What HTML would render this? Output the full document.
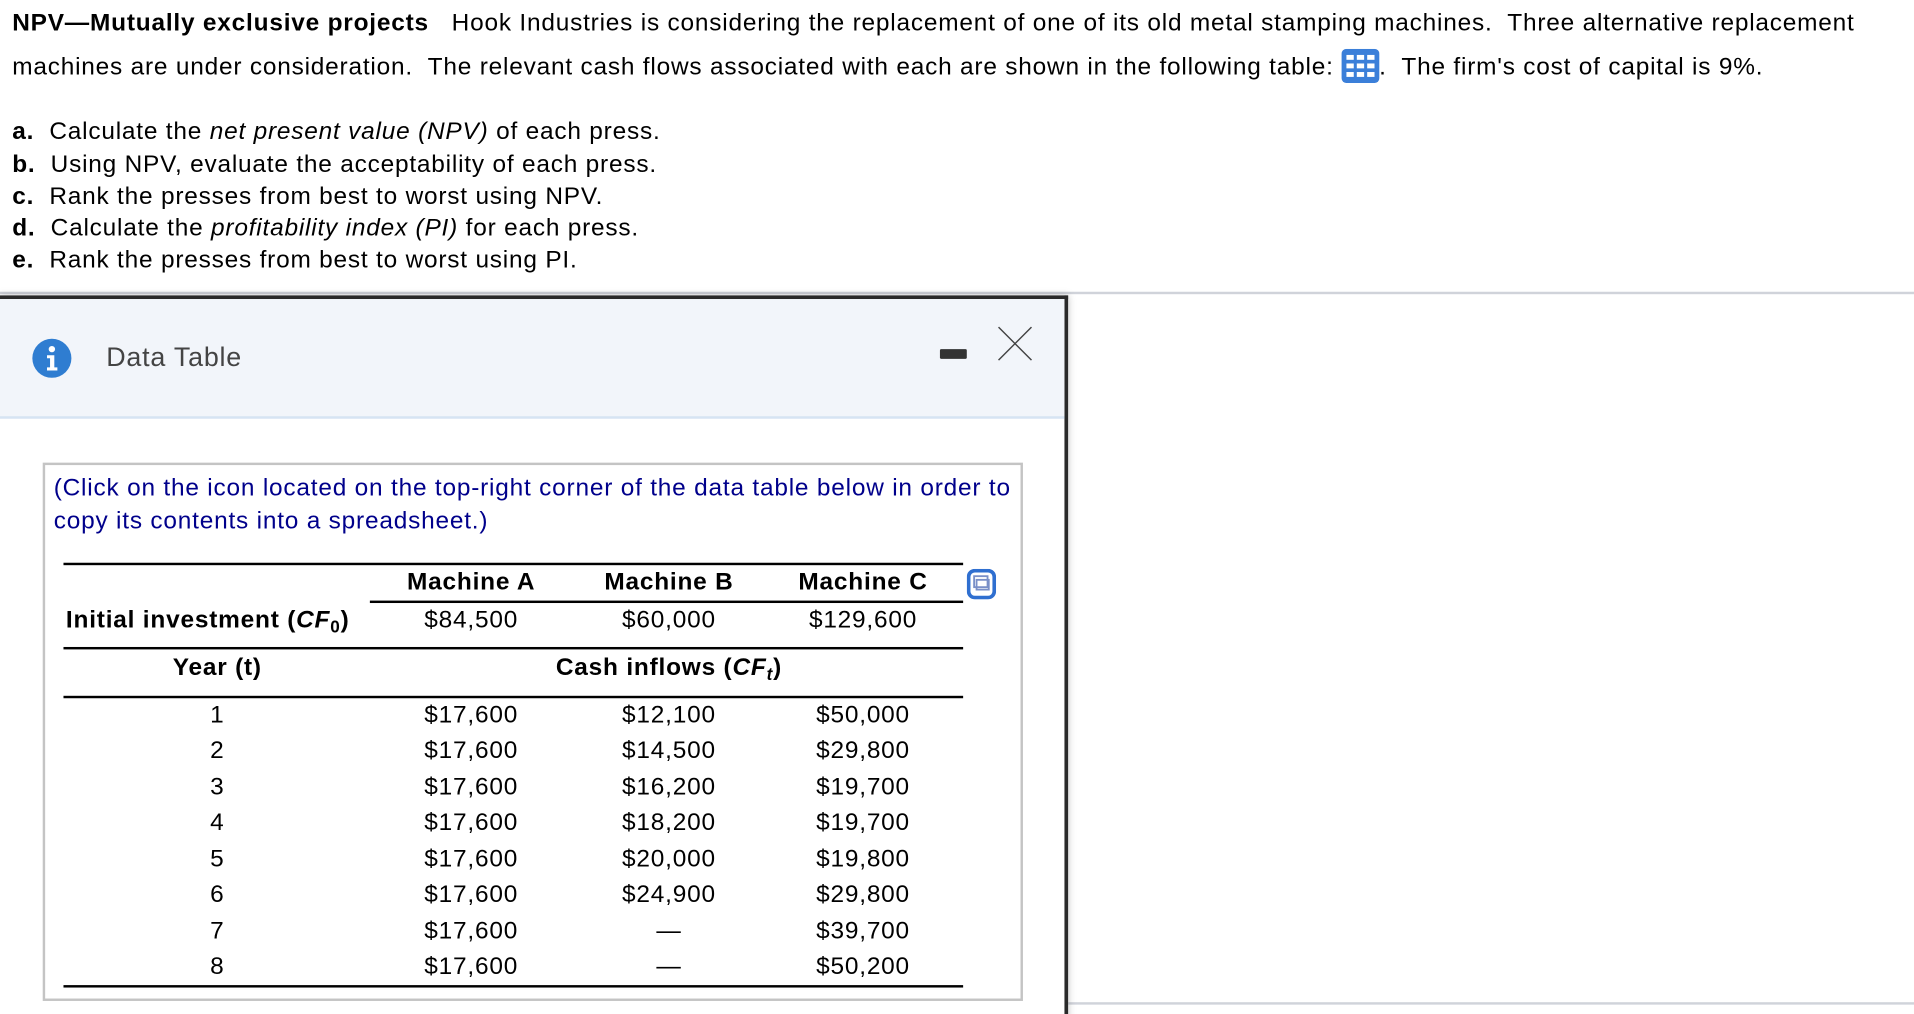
<!DOCTYPE html>
<html><head><meta charset="utf-8"><style>
html,body{margin:0;padding:0;background:#fff;width:1914px;height:1014px;overflow:hidden}
#w{position:absolute;left:0;top:0;width:1568px;height:831px;transform:scale(1.2207);transform-origin:0 0;font-family:"Liberation Sans",Arial,sans-serif;color:#000;overflow:hidden}
.t{position:absolute;font-size:20px;line-height:24px;white-space:nowrap;letter-spacing:0.65px}
.c{transform:translateX(-50%)}
.ln{position:absolute;background:#000}
b{font-weight:bold}
sub{font-size:14px;vertical-align:-4px;line-height:0}
</style></head><body><div id="w">
<div class="t" style="left:10px;top:7px"><b>NPV—Mutually exclusive projects</b>&nbsp;&nbsp; Hook Industries is considering the replacement of one of its old metal stamping machines.&nbsp; Three alternative replacement</div>
<div class="t" style="left:10px;top:40px">machines are under consideration.&nbsp; The relevant cash flows associated with each are shown in the following table: <svg style="vertical-align:-7px" width="31" height="28" viewBox="0 0 31 28"><rect x="0" y="0" width="31" height="28" rx="4" fill="#3b7fd9"/><g fill="#fff"><rect x="4" y="5" width="6" height="4"/><rect x="12.5" y="5" width="6" height="4"/><rect x="21" y="5" width="6" height="4"/><rect x="4" y="12" width="6" height="4"/><rect x="12.5" y="12" width="6" height="4"/><rect x="21" y="12" width="6" height="4"/><rect x="4" y="19" width="6" height="4"/><rect x="12.5" y="19" width="6" height="4"/><rect x="21" y="19" width="6" height="4"/></g></svg>.&nbsp; The firm's cost of capital is 9%.</div>
<div class="t" style="left:10px;top:96px"><b>a.</b>&nbsp; Calculate the <i>net present value (NPV)</i> of each press.</div>
<div class="t" style="left:10px;top:123px"><b>b.</b>&nbsp; Using NPV, evaluate the acceptability of each press.</div>
<div class="t" style="left:10px;top:149px"><b>c.</b>&nbsp; Rank the presses from best to worst using NPV.</div>
<div class="t" style="left:10px;top:175px"><b>d.</b>&nbsp; Calculate the <i>profitability index (PI)</i> for each press.</div>
<div class="t" style="left:10px;top:201px"><b>e.</b>&nbsp; Rank the presses from best to worst using PI.</div>
<div style="position:absolute;left:0;top:239px;width:1568px;height:2px;background:#d0d3da"></div>
<div style="position:absolute;left:875px;top:821px;width:693px;height:2px;background:#d0d3da"></div>
<div style="position:absolute;left:0;top:242px;width:872px;height:600px;border-top:3px solid #2a2a2a;border-right:3px solid #2a2a2a;background:#fff;box-shadow:0 0 6px rgba(0,0,0,.25)">
 <div style="position:absolute;left:0;top:0;width:872px;height:96px;background:#f2f5fa;border-bottom:2px solid #d6e4f3"></div>
</div>
<svg style="position:absolute;left:26px;top:277px" width="33" height="33"><circle cx="16.5" cy="16.5" r="16" fill="#2f7dd1"/><circle cx="16.5" cy="9" r="2.6" fill="#fff"/><path d="M12.5 14h6v10h2.5v2.5h-8.5V24h2.5v-7.5h-2.5z" fill="#fff"/></svg>
<div class="t" style="left:87px;top:281px;font-size:22px;color:#444">Data Table</div>
<div style="position:absolute;left:770px;top:286px;width:22px;height:8px;background:#333;border-radius:1px"></div>
<svg style="position:absolute;left:817px;top:267px" width="30" height="30"><path d="M1 1L28 28M28 1L1 28" stroke="#444" stroke-width="1.2" fill="none"/></svg>
<div style="position:absolute;left:35px;top:379px;width:799px;height:437px;border:2px solid #c4c4c4"></div>
<div class="t" style="left:44px;top:388px;color:#00008b">(Click on the icon located on the top-right corner of the data table below in order to</div>
<div class="t" style="left:44px;top:415px;color:#00008b">copy its contents into a spreadsheet.)</div>
<div class="ln" style="left:52px;top:461px;width:737px;height:2px"></div>
<div class="ln" style="left:303px;top:492px;width:486px;height:1.5px"></div>
<div class="ln" style="left:52px;top:530px;width:737px;height:1.5px"></div>
<div class="ln" style="left:52px;top:570px;width:737px;height:1.5px"></div>
<div class="ln" style="left:52px;top:807px;width:737px;height:2px"></div>
<svg style="position:absolute;left:792px;top:466px" width="24" height="25" viewBox="0 0 24 25"><rect x="1.5" y="1.5" width="21" height="22" rx="5" fill="#fff" stroke="#2f6fd0" stroke-width="3"/><rect x="6" y="6" width="11" height="9" fill="none" stroke="#7a90c8" stroke-width="1.5"/><rect x="8" y="9" width="10" height="8" fill="none" stroke="#7a90c8" stroke-width="1.5"/></svg>
<div class="t c" style="left:386px;top:465px"><b>Machine A</b></div>
<div class="t c" style="left:548px;top:465px"><b>Machine B</b></div>
<div class="t c" style="left:707px;top:465px"><b>Machine C</b></div>
<div class="t" style="left:54px;top:496px"><b>Initial investment (<i>CF</i><sub>0</sub>)</b></div>
<div class="t c" style="left:386px;top:496px">$84,500</div>
<div class="t c" style="left:548px;top:496px">$60,000</div>
<div class="t c" style="left:707px;top:496px">$129,600</div>
<div class="t c" style="left:178px;top:535px"><b>Year (t)</b></div>
<div class="t c" style="left:548px;top:535px"><b>Cash inflows (<i>CF<sub>t</sub></i>)</b></div>
<div class="t c" style="left:178px;top:574px">1</div><div class="t c" style="left:386px;top:574px">$17,600</div><div class="t c" style="left:548px;top:574px">$12,100</div><div class="t c" style="left:707px;top:574px">$50,000</div>
<div class="t c" style="left:178px;top:603px">2</div><div class="t c" style="left:386px;top:603px">$17,600</div><div class="t c" style="left:548px;top:603px">$14,500</div><div class="t c" style="left:707px;top:603px">$29,800</div>
<div class="t c" style="left:178px;top:633px">3</div><div class="t c" style="left:386px;top:633px">$17,600</div><div class="t c" style="left:548px;top:633px">$16,200</div><div class="t c" style="left:707px;top:633px">$19,700</div>
<div class="t c" style="left:178px;top:662px">4</div><div class="t c" style="left:386px;top:662px">$17,600</div><div class="t c" style="left:548px;top:662px">$18,200</div><div class="t c" style="left:707px;top:662px">$19,700</div>
<div class="t c" style="left:178px;top:692px">5</div><div class="t c" style="left:386px;top:692px">$17,600</div><div class="t c" style="left:548px;top:692px">$20,000</div><div class="t c" style="left:707px;top:692px">$19,800</div>
<div class="t c" style="left:178px;top:721px">6</div><div class="t c" style="left:386px;top:721px">$17,600</div><div class="t c" style="left:548px;top:721px">$24,900</div><div class="t c" style="left:707px;top:721px">$29,800</div>
<div class="t c" style="left:178px;top:751px">7</div><div class="t c" style="left:386px;top:751px">$17,600</div><div class="t c" style="left:548px;top:751px">—</div><div class="t c" style="left:707px;top:751px">$39,700</div>
<div class="t c" style="left:178px;top:780px">8</div><div class="t c" style="left:386px;top:780px">$17,600</div><div class="t c" style="left:548px;top:780px">—</div><div class="t c" style="left:707px;top:780px">$50,200</div>
</div></body></html>
